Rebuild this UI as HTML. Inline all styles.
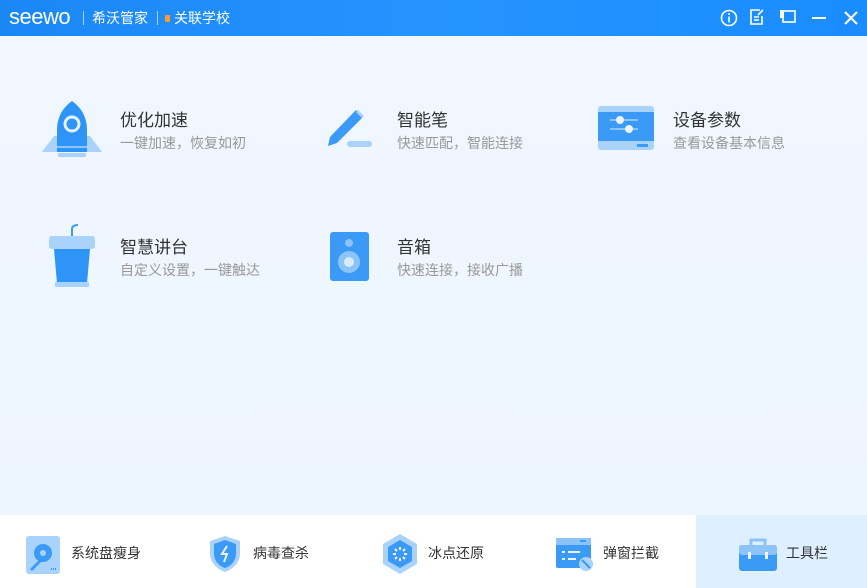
<!DOCTYPE html>
<html><head><meta charset="utf-8"><style>
*{margin:0;padding:0;box-sizing:border-box}
body{width:867px;height:588px;overflow:hidden;background:#eef6ff;font-family:"Liberation Sans","Noto Sans CJK SC",sans-serif;position:relative}
.hdr{position:absolute;left:0;top:0;width:867px;height:36px;background:linear-gradient(90deg,#1a87f5,#2594ff 50%,#1a8cff);color:#fff}
.hdr .logo{position:absolute;left:9px;top:4px;font-size:22px;letter-spacing:-0.5px}
.hdr .t{position:absolute;top:8px;font-size:14px}
.sep{position:absolute;top:11px;width:1px;height:14px;background:rgba(255,255,255,.6)}
.main{position:absolute;left:0;top:36px;width:867px;height:479px;background:linear-gradient(180deg,#f0f7ff,#edf5ff)}
.ti{position:absolute;font-size:17px;color:#333}
.su{position:absolute;font-size:14px;color:#999}
.bar{position:absolute;left:0;top:515px;width:867px;height:73px;background:#fff}
.bl{position:absolute;top:543px;font-size:14px;color:#333}
svg{position:absolute}
</style></head><body>
<div class="hdr">
<div class="logo">seewo</div>
<div class="sep" style="left:83px"></div>
<div class="t" style="left:92px">希沃管家</div>
<div class="sep" style="left:157px"></div>
<div style="position:absolute;left:165px;top:15px;width:5px;height:7px;background:#ff9a2e;border-radius:1px"></div>
<div class="t" style="left:174px">关联学校</div>
<svg style="left:719px;top:8px" width="20" height="20" viewBox="0 0 20 20"><circle cx="10" cy="10" r="7.5" fill="none" stroke="#fff" stroke-width="1.6"/><rect x="9.2" y="8.5" width="1.6" height="6" fill="#fff"/><circle cx="10" cy="6" r="1" fill="#fff"/></svg>
<svg style="left:748px;top:8px" width="18" height="18" viewBox="0 0 18 18"><path d="M12 2H3v14h11V8" fill="none" stroke="#fff" stroke-width="1.6"/><path d="M6 9h5M6 12h5M10 7l5-5" stroke="#fff" stroke-width="1.6"/></svg>
<svg style="left:779px;top:8px" width="18" height="18" viewBox="0 0 18 18"><rect x="4" y="3" width="12" height="11" fill="none" stroke="#fff" stroke-width="1.6"/><rect x="1" y="2" width="4" height="8" fill="#fff"/></svg>
<div style="position:absolute;left:812px;top:17px;width:14px;height:2px;background:#fff"></div>
<svg style="left:843px;top:10px" width="16" height="16" viewBox="0 0 16 16"><path d="M2 2L14 14M14 2L2 14" stroke="#fff" stroke-width="2"/></svg>
</div>
<div class="main"></div>
<!-- rocket -->
<svg style="left:40px;top:100px" width="64" height="60" viewBox="0 0 64 60"><path d="M2 52L14 36h36l12 16z" fill="#a9d3fb"/><path d="M32 1C22 8 17 18 17 30v22h30V30C47 18 42 8 32 1z" fill="#2e94f5"/><circle cx="32" cy="24" r="7" fill="none" stroke="#e6f3ff" stroke-width="3"/><rect x="17" y="46" width="30" height="2" fill="#8cc4fa"/><rect x="18" y="53" width="28" height="4" rx="1" fill="#a9d3fb"/></svg>
<div class="ti" style="left:120px;top:106px">优化加速</div><div class="su" style="left:120px;top:133px">一键加速，恢复如初</div>
<!-- pen -->
<svg style="left:326px;top:106px" width="48" height="44" viewBox="0 0 48 44"><path d="M30 4l7 7-26 26-9 3 2-9z" fill="#3a9af5"/><path d="M31 5l6 6" stroke="#a9d3fb" stroke-width="3"/><rect x="21" y="35" width="25" height="6" rx="3" fill="#a9d3fb"/></svg>
<div class="ti" style="left:397px;top:106px">智能笔</div><div class="su" style="left:397px;top:133px">快速匹配，智能连接</div>
<!-- device -->
<svg style="left:598px;top:106px" width="56" height="45" viewBox="0 0 56 45"><rect x="0" y="0" width="56" height="44" rx="3" fill="#a9d3fb"/><rect x="0" y="6" width="56" height="29" fill="#3a9af5"/><path d="M12 14h28M12 23h28" stroke="#8cc4fa" stroke-width="2"/><circle cx="22" cy="14" r="4" fill="#eaf5ff"/><circle cx="31" cy="23" r="4" fill="#eaf5ff"/><rect x="39" y="38" width="11" height="3" fill="#3a9af5"/></svg>
<div class="ti" style="left:673px;top:106px">设备参数</div><div class="su" style="left:673px;top:133px">查看设备基本信息</div>
<!-- podium -->
<svg style="left:46px;top:223px" width="52" height="66" viewBox="0 0 52 66"><path d="M26 14V6c0-3 3-4 6-4" fill="none" stroke="#3a9af5" stroke-width="2"/><rect x="3" y="13" width="46" height="13" rx="3" fill="#a9d3fb"/><path d="M8 26h36l-3 34H11z" fill="#2e94f5"/><rect x="9" y="59" width="34" height="5" rx="1" fill="#a9d3fb"/></svg>
<div class="ti" style="left:120px;top:233px">智慧讲台</div><div class="su" style="left:120px;top:260px">自定义设置，一键触达</div>
<!-- speaker -->
<svg style="left:330px;top:232px" width="39" height="49" viewBox="0 0 39 49"><rect x="0" y="0" width="39" height="49" rx="3" fill="#3a9af5"/><circle cx="19" cy="11" r="4" fill="#8cc4fa"/><circle cx="19" cy="30" r="11" fill="#8cc4fa"/><circle cx="19" cy="30" r="5" fill="#d8ecff"/></svg>
<div class="ti" style="left:397px;top:233px">音箱</div><div class="su" style="left:397px;top:260px">快速连接，接收广播</div>
<div class="bar"></div>
<div style="position:absolute;left:696px;top:515px;width:171px;height:73px;background:#deefff"></div>
<svg style="left:26px;top:536px" width="34" height="38" viewBox="0 0 34 38"><rect x="0" y="0" width="34" height="38" rx="3" fill="#a9d3fb"/><circle cx="17" cy="17" r="9" fill="#3a9af5"/><circle cx="17" cy="17" r="3" fill="#a9d3fb"/><path d="M5 34l10-10" stroke="#3a9af5" stroke-width="3"/><path d="M25 33h6" stroke="#3a9af5" stroke-width="2" stroke-dasharray="1 1"/></svg>
<div class="bl" style="left:71px">系统盘瘦身</div>
<svg style="left:208px;top:535px" width="34" height="38" viewBox="0 0 34 38"><path d="M17 1L2 6v12c0 10 7 16 15 19 8-3 15-9 15-19V6z" fill="#a9d3fb"/><path d="M17 5L6 9v9c0 8 5 13 11 15 6-2 11-7 11-15V9z" fill="#3a9af5"/><path d="M19 11l-5 8h5l-3 8" fill="none" stroke="#eaf5ff" stroke-width="2"/></svg>
<div class="bl" style="left:253px">病毒查杀</div>
<svg style="left:382px;top:534px" width="36" height="40" viewBox="0 0 36 40"><path d="M18 0L35 10v20L18 40 1 30V10z" fill="#a9d3fb"/><path d="M18 6L30 13v14L18 34 6 27V13z" fill="#3a9af5"/><g stroke="#eaf5ff" stroke-width="2"><path d="M18 13v3M18 24v3M11 20h3M22 20h3M13 15l2 2M21 23l2 2M23 15l-2 2M13 25l2-2"/></g></svg>
<div class="bl" style="left:428px">冰点还原</div>
<svg style="left:556px;top:538px" width="39" height="34" viewBox="0 0 39 34"><rect x="0" y="0" width="35" height="30" rx="2" fill="#3a9af5"/><rect x="0" y="0" width="35" height="7" fill="#8cc4fa"/><rect x="24" y="2" width="6" height="2" fill="#3a9af5"/><path d="M6 14h3M12 14h12M6 21h3M12 21h8" stroke="#eaf5ff" stroke-width="2"/><circle cx="30" cy="26" r="7" fill="#a9d3fb"/><path d="M26 22l8 8" stroke="#3a9af5" stroke-width="2"/></svg>
<div class="bl" style="left:603px">弹窗拦截</div>
<svg style="left:739px;top:537px" width="38" height="34" viewBox="0 0 38 34"><path d="M12 8V3h14v5" fill="none" stroke="#8cc4fa" stroke-width="3"/><rect x="0" y="8" width="38" height="26" rx="3" fill="#3a9af5"/><rect x="0" y="8" width="38" height="10" rx="3" fill="#8cc4fa"/><rect x="9" y="15" width="3" height="7" fill="#eaf5ff"/><rect x="26" y="15" width="3" height="7" fill="#eaf5ff"/></svg>
<div class="bl" style="left:786px">工具栏</div>
</body></html>
